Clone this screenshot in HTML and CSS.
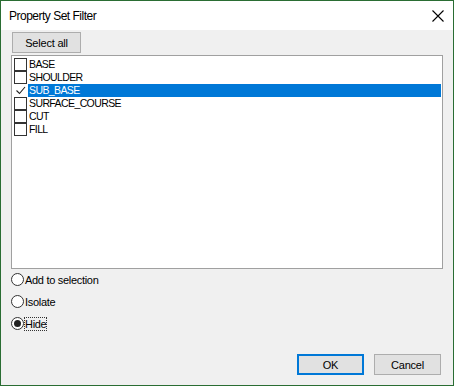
FILE: index.html
```html
<!DOCTYPE html>
<html>
<head>
    <title>Property Set Filter</title>
    <link rel="stylesheet" href="styles.css">
</head>
<body>
    <div class="window">
        <div class="titlebar">
            <span class="title">Property Set Filter</span>
            <svg class="close" width="12" height="12" viewBox="0 0 12 12">
                <path d="M0.5 0.5 L11.5 11.5 M11.5 0.5 L0.5 11.5" stroke="#000" stroke-width="1.1" fill="none"/>
            </svg>
        </div>
        <div class="content">
            <div class="toolbar">
                <button class="btn select-all">Select all</button>
            </div>
            <div class="listbox">
                <div class="item"><span class="check"></span><span class="label">BASE</span></div>
                <div class="item"><span class="check"></span><span class="label">SHOULDER</span></div>
                <div class="item selected"><span class="check checked">
                    <svg width="11" height="11" viewBox="0 0 11 11"><path d="M1.5 5.5 L4.5 8.5 L10 2" stroke="#222" stroke-width="1.1" fill="none"/></svg>
                </span><span class="label">SUB_BASE</span></div>
                <div class="item"><span class="check"></span><span class="label">SURFACE_COURSE</span></div>
                <div class="item"><span class="check"></span><span class="label">CUT</span></div>
                <div class="item"><span class="check"></span><span class="label">FILL</span></div>
            </div>
            <div class="options">
                <label class="radio"><span class="circle"></span><span>Add to selection</span></label>
                <label class="radio"><span class="circle"></span><span>Isolate</span></label>
                <label class="radio"><span class="circle on"></span><span class="focus">Hide</span></label>
            </div>
            <div class="footer">
                <button class="btn default">OK</button>
                <button class="btn">Cancel</button>
            </div>
        </div>
    </div>
</body>
</html>
```

FILE: styles.css
```css
body {
    margin: 0;
    font-family: "Liberation Sans", Arial, sans-serif;
    font-size: 11px;
    color: #000;
}
.window {
    width: 454px;
    height: 386px;
    box-sizing: border-box;
    border: 1px solid #2a6d33;
    display: flex;
    flex-direction: column;
}
.titlebar {
    height: 29px;
    background: #fff;
    display: flex;
    align-items: center;
    justify-content: space-between;
    padding: 0 9px 0 8px;
}
.title {
    font-size: 12px;
    letter-spacing: -0.5px;
}
.content {
    flex: 1;
    background: #f0f0f0;
    padding: 2px 10px 0 10px;
    display: flex;
    flex-direction: column;
}
.btn {
    font-family: inherit;
    font-size: 11px;
    letter-spacing: -0.2px;
    background: #e1e1e1;
    border: 1px solid #adadad;
    height: 21px;
    width: 67px;
    padding: 0;
    color: #000;
}
.select-all {
    width: 69px;
    margin-left: 1px;
}
.listbox {
    margin-top: 2px;
    height: 214px;
    box-sizing: border-box;
    background: #fff;
    border: 1px solid #a0a0a0;
    padding: 2px 1px;
}
.item {
    display: flex;
    align-items: center;
    height: 13px;
}
.check {
    width: 11px;
    height: 11px;
    border: 1px solid #333;
    margin: 0 1px 0 1px;
    background: #fff;
    display: flex;
    align-items: center;
    justify-content: center;
}
.check.checked {
    border-color: #fff;
}
.label {
    flex: 1;
    height: 13px;
    line-height: 13px;
    padding-left: 1px;
    font-size: 10.5px;
    letter-spacing: -0.6px;
}
.selected .label {
    background: #0078d7;
    color: #fff;
}
.options {
    margin-top: 4px;
    display: flex;
    flex-direction: column;
    gap: 9px;
    letter-spacing: -0.3px;
}
.radio {
    display: flex;
    align-items: center;
    height: 13px;
}
.circle {
    width: 11px;
    height: 11px;
    border: 1px solid #333;
    border-radius: 50%;
    background: #fff;
    margin-right: 1px;
    display: flex;
    align-items: center;
    justify-content: center;
}
.circle.on::after {
    content: "";
    width: 7px;
    height: 7px;
    border-radius: 50%;
    background: #222;
}
.focus {
    outline: 1px dotted #333;
    outline-offset: 0;
}
.footer {
    margin-top: auto;
    padding-bottom: 10px;
    display: flex;
    justify-content: flex-end;
    gap: 10px;
    padding-right: 2px;
}
.default {
    border: 1px solid #0078d7;
    box-shadow: inset 0 0 0 1px #0078d7;
}
```
